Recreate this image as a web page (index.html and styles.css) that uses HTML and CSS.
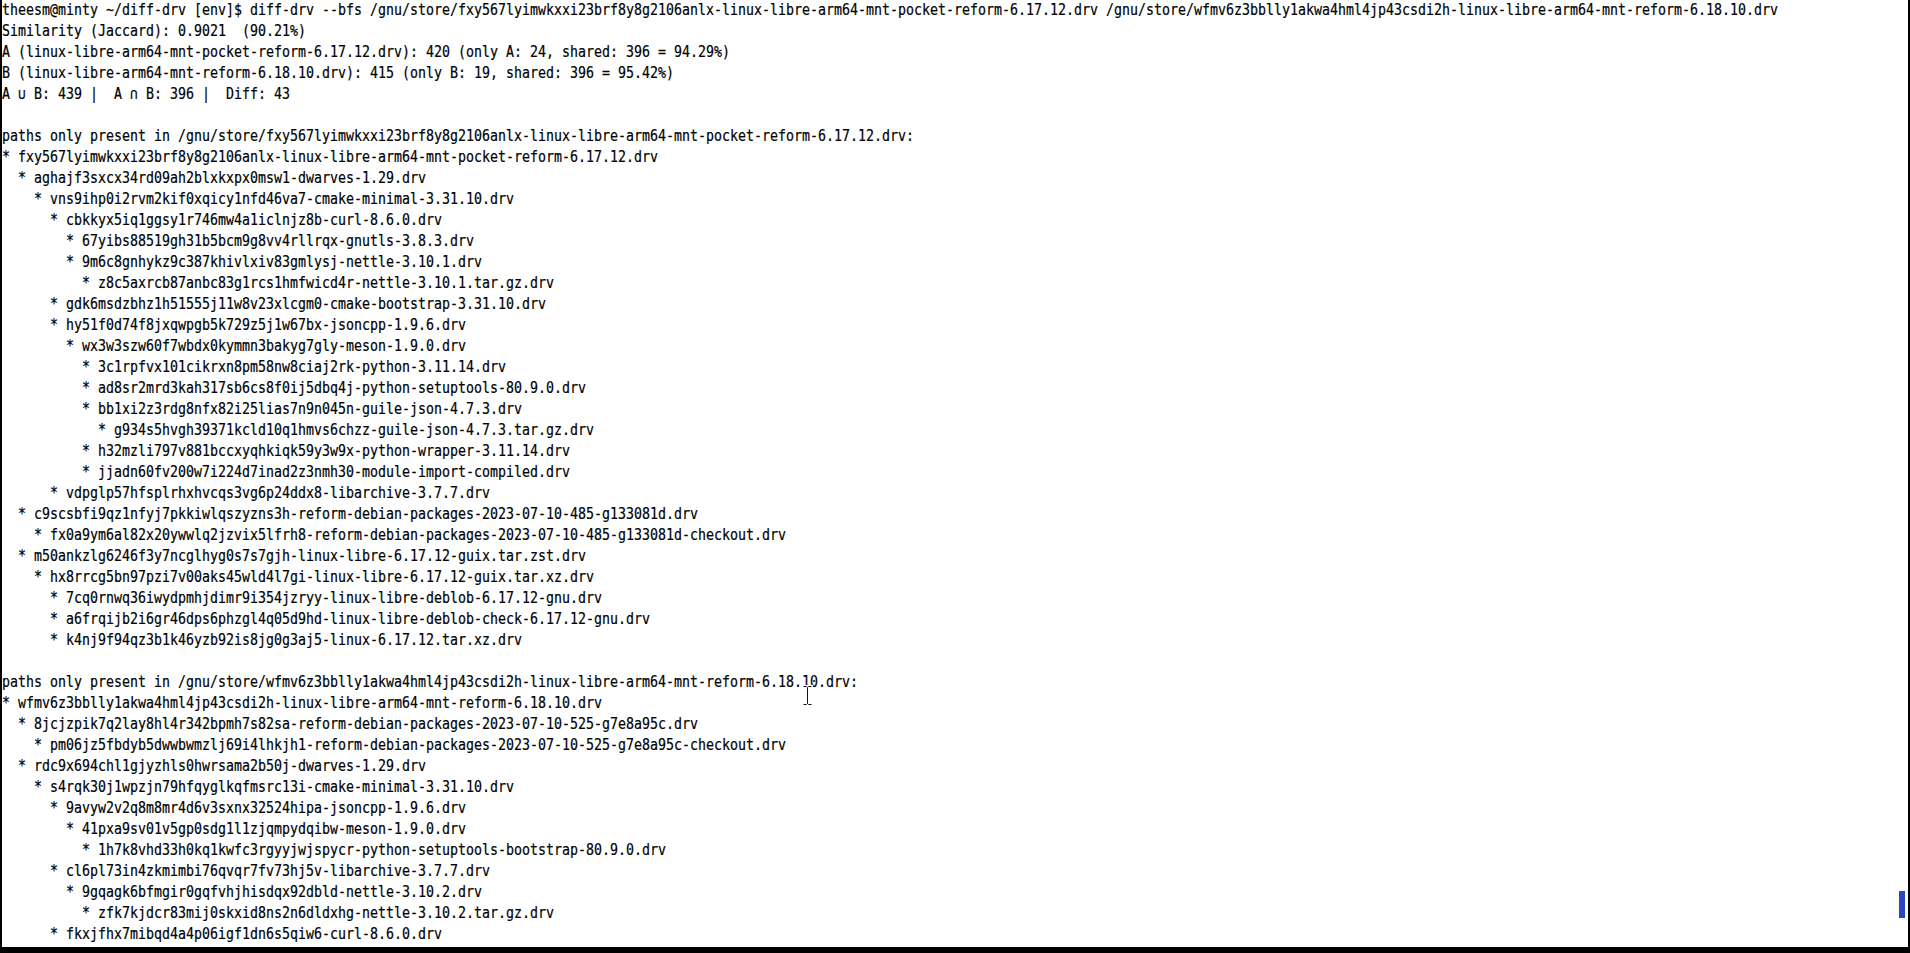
FILE: index.html
```html
<!DOCTYPE html>
<html lang="en">
<head>
<meta charset="utf-8">
<title>theesm@minty: ~/diff-drv</title>
<link rel="stylesheet" href="styles.css">
</head>
<body>
<div class="window">
  <div class="term">
<pre class="out">theesm@minty ~/diff-drv [env]$ diff-drv --bfs /gnu/store/fxy567lyimwkxxi23brf8y8g2106anlx-linux-libre-arm64-mnt-pocket-reform-6.17.12.drv /gnu/store/wfmv6z3bblly1akwa4hml4jp43csdi2h-linux-libre-arm64-mnt-reform-6.18.10.drv
Similarity (Jaccard): 0.9021  (90.21%)
A (linux-libre-arm64-mnt-pocket-reform-6.17.12.drv): 420 (only A: 24, shared: 396 = 94.29%)
B (linux-libre-arm64-mnt-reform-6.18.10.drv): 415 (only B: 19, shared: 396 = 95.42%)
A ∪ B: 439 |  A ∩ B: 396 |  Diff: 43

paths only present in /gnu/store/fxy567lyimwkxxi23brf8y8g2106anlx-linux-libre-arm64-mnt-pocket-reform-6.17.12.drv:
* fxy567lyimwkxxi23brf8y8g2106anlx-linux-libre-arm64-mnt-pocket-reform-6.17.12.drv
  * aghajf3sxcx34rd09ah2blxkxpx0msw1-dwarves-1.29.drv
    * vns9ihp0i2rvm2kif0xqicy1nfd46va7-cmake-minimal-3.31.10.drv
      * cbkkyx5iq1ggsy1r746mw4a1iclnjz8b-curl-8.6.0.drv
        * 67yibs88519gh31b5bcm9g8vv4rllrqx-gnutls-3.8.3.drv
        * 9m6c8gnhykz9c387khivlxiv83gmlysj-nettle-3.10.1.drv
          * z8c5axrcb87anbc83g1rcs1hmfwicd4r-nettle-3.10.1.tar.gz.drv
      * gdk6msdzbhz1h51555j11w8v23xlcgm0-cmake-bootstrap-3.31.10.drv
      * hy51f0d74f8jxqwpgb5k729z5j1w67bx-jsoncpp-1.9.6.drv
        * wx3w3szw60f7wbdx0kymmn3bakyg7gly-meson-1.9.0.drv
          * 3c1rpfvx101cikrxn8pm58nw8ciaj2rk-python-3.11.14.drv
          * ad8sr2mrd3kah317sb6cs8f0ij5dbq4j-python-setuptools-80.9.0.drv
          * bb1xi2z3rdg8nfx82i25lias7n9n045n-guile-json-4.7.3.drv
            * g934s5hvgh39371kcld10q1hmvs6chzz-guile-json-4.7.3.tar.gz.drv
          * h32mzli797v881bccxyqhkiqk59y3w9x-python-wrapper-3.11.14.drv
          * jjadn60fv200w7i224d7inad2z3nmh30-module-import-compiled.drv
      * vdpglp57hfsplrhxhvcqs3vg6p24ddx8-libarchive-3.7.7.drv
  * c9scsbfi9qz1nfyj7pkkiwlqszyzns3h-reform-debian-packages-2023-07-10-485-g133081d.drv
    * fx0a9ym6al82x20ywwlq2jzvix5lfrh8-reform-debian-packages-2023-07-10-485-g133081d-checkout.drv
  * m50ankzlg6246f3y7ncglhyg0s7s7gjh-linux-libre-6.17.12-guix.tar.zst.drv
    * hx8rrcg5bn97pzi7v00aks45wld4l7gi-linux-libre-6.17.12-guix.tar.xz.drv
      * 7cq0rnwq36iwydpmhjdimr9i354jzryy-linux-libre-deblob-6.17.12-gnu.drv
      * a6frqijb2i6gr46dps6phzgl4q05d9hd-linux-libre-deblob-check-6.17.12-gnu.drv
      * k4nj9f94qz3b1k46yzb92is8jg0g3aj5-linux-6.17.12.tar.xz.drv

paths only present in /gnu/store/wfmv6z3bblly1akwa4hml4jp43csdi2h-linux-libre-arm64-mnt-reform-6.18.10.drv:
* wfmv6z3bblly1akwa4hml4jp43csdi2h-linux-libre-arm64-mnt-reform-6.18.10.drv
  * 8jcjzpik7q2lay8hl4r342bpmh7s82sa-reform-debian-packages-2023-07-10-525-g7e8a95c.drv
    * pm06jz5fbdyb5dwwbwmzlj69i4lhkjh1-reform-debian-packages-2023-07-10-525-g7e8a95c-checkout.drv
  * rdc9x694chl1gjyzhls0hwrsama2b50j-dwarves-1.29.drv
    * s4rqk30j1wpzjn79hfqyglkqfmsrc13i-cmake-minimal-3.31.10.drv
      * 9avyw2v2q8m8mr4d6v3sxnx32524hipa-jsoncpp-1.9.6.drv
        * 41pxa9sv01v5gp0sdg1l1zjqmpydqibw-meson-1.9.0.drv
          * 1h7k8vhd33h0kq1kwfc3rgyyjwjspycr-python-setuptools-bootstrap-80.9.0.drv
      * cl6pl73in4zkmimbi76qvqr7fv73hj5v-libarchive-3.7.7.drv
        * 9gqagk6bfmgir0gqfvhjhisdqx92dbld-nettle-3.10.2.drv
          * zfk7kjdcr83mij0skxid8ns2n6dldxhg-nettle-3.10.2.tar.gz.drv
      * fkxjfhx7mibqd4a4p06igf1dn6s5qiw6-curl-8.6.0.drv</pre>
    <svg class="ibeam" width="11" height="21" viewBox="0 0 11 21" aria-hidden="true">
      <path d="M1.5 1.5h3l1 1 1-1h3M5.5 2.5v16M1.5 19.5h3l1-1 1 1h3" fill="none" stroke="#fff" stroke-width="3" stroke-linecap="square"/>
      <path d="M1.5 1.5h3l1 1 1-1h3M5.5 2.5v16M1.5 19.5h3l1-1 1 1h3" fill="none" stroke="#111" stroke-width="1"/>
    </svg>
  </div>
  <div class="scrollbar">
    <div class="thumb" style="top: 891px; height: 27px;"></div>
  </div>
</div>
</body>
</html>
```

FILE: styles.css
```css
html, body {
  margin: 0;
  padding: 0;
  background: #000;
}

.window {
  display: flex;
  box-sizing: border-box;
  width: 1910px;
  height: 953px;
  background: #fff;
  border-left: 2px solid #000;
  border-right: 2px solid #000;
  border-bottom: 6px solid #000;
  overflow: hidden;
}

.term {
  position: relative;
  flex: 1;
  min-width: 0;
  overflow: hidden;
}

.out {
  margin: 0;
  padding: 0;
  font-family: "DejaVu Sans Mono", "Liberation Mono", monospace;
  font-size: 15.5px;
  line-height: 21px;
  color: #000;
  -webkit-text-stroke: 0.2px #000;
  white-space: pre;
  transform: scaleX(0.8573);
  transform-origin: 0 0;
}

.ibeam {
  position: absolute;
  left: 800px;
  top: 685px;
}

.scrollbar {
  position: relative;
  flex: none;
  width: 11px;
}

.thumb {
  position: absolute;
  left: 2px;
  width: 6px;
  background: #2a46c2;
}
```
